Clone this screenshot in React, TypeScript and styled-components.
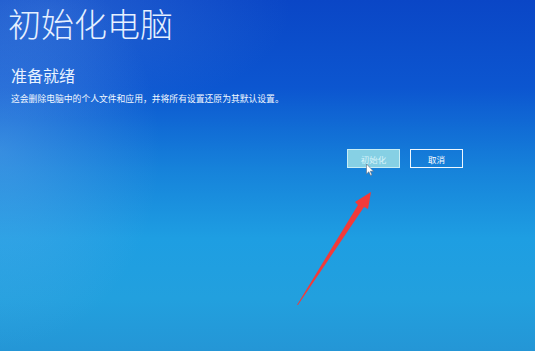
import React from "react";
import styled, { createGlobalStyle } from "styled-components";

const Global = createGlobalStyle`
  html, body { margin: 0; padding: 0; width: 535px; height: 351px; overflow: hidden; }
  #root { width: 535px; height: 351px; }
`;

const Screen = styled.div`
  position: relative;
  width: 535px;
  height: 351px;
  box-sizing: border-box;
  overflow: hidden;
  padding: 4px 72px 0 8px;
  display: flex;
  flex-direction: column;
  font-family: "Noto Sans CJK SC", "Noto Sans", sans-serif;
  color: #eef6ff;
  background:
    radial-gradient(ellipse 160px 200px at 0px 150px, rgba(120, 180, 240, 0.35), rgba(120, 180, 240, 0) 100%),
    radial-gradient(ellipse 240px 110px at 50px 10px, rgba(90, 150, 230, 0.3), rgba(90, 150, 230, 0) 100%),
    linear-gradient(180deg, #0a46c6 0%, #0c56d0 25%, #1682da 48%, #1e9ee2 68%, #22a0de 85%, #2496d6 100%);
`;

const Title = styled.h1`
  margin: 0;
  font-size: 33px;
  font-weight: 300;
  line-height: 38px;
  letter-spacing: 0;
  color: #e6f0ff;
`;

const Subtitle = styled.h2`
  margin: 23px 0 0 3px;
  font-size: 16px;
  font-weight: 400;
  line-height: 20px;
  color: #e8f2ff;
`;

const Description = styled.p`
  margin: 8px 0 0 3px;
  font-size: 8.8px;
  line-height: 12px;
  color: #f2f8ff;
`;

const ButtonRow = styled.div`
  display: flex;
  justify-content: flex-end;
  gap: 10px;
  margin-top: 44px;
`;

const Button = styled.div<{ $primary?: boolean }>`
  width: 53px;
  height: 19px;
  box-sizing: border-box;
  display: flex;
  align-items: center;
  justify-content: center;
  font-size: 8.5px;
  border: 1.5px solid ${(p) => (p.$primary ? "#c8eef6" : "#f0f8ff")};
  background: ${(p) => (p.$primary ? "#86d0e4" : "transparent")};
  color: ${(p) => (p.$primary ? "#d8f4fa" : "#ffffff")};
`;

const Overlay = styled.svg`
  position: absolute;
  left: 0;
  top: 0;
  pointer-events: none;
`;

export default function App() {
  return (
    <>
      <Global />
      <Screen>
        <Title>初始化电脑</Title>
        <Subtitle>准备就绪</Subtitle>
        <Description>这会删除电脑中的个人文件和应用，并将所有设置还原为其默认设置。</Description>
        <ButtonRow>
          <Button $primary>初始化</Button>
          <Button>取消</Button>
        </ButtonRow>
        <Overlay width="535" height="351" viewBox="0 0 535 351">
          <path
            d="M366.5 164 L366.5 174 L368.8 171.8 L370.6 175.6 L372 175 L370.3 171.3 L373.5 171.2 Z"
            fill="#ffffff"
            stroke="#5a6a80"
            strokeWidth="0.6"
          />
          <path
            d="M297 305 L358 205 L355 202 L371 192 L368 209 L364 207 L298 305 Z"
            fill="#f23a3a"
          />
        </Overlay>
      </Screen>
    </>
  );
}
